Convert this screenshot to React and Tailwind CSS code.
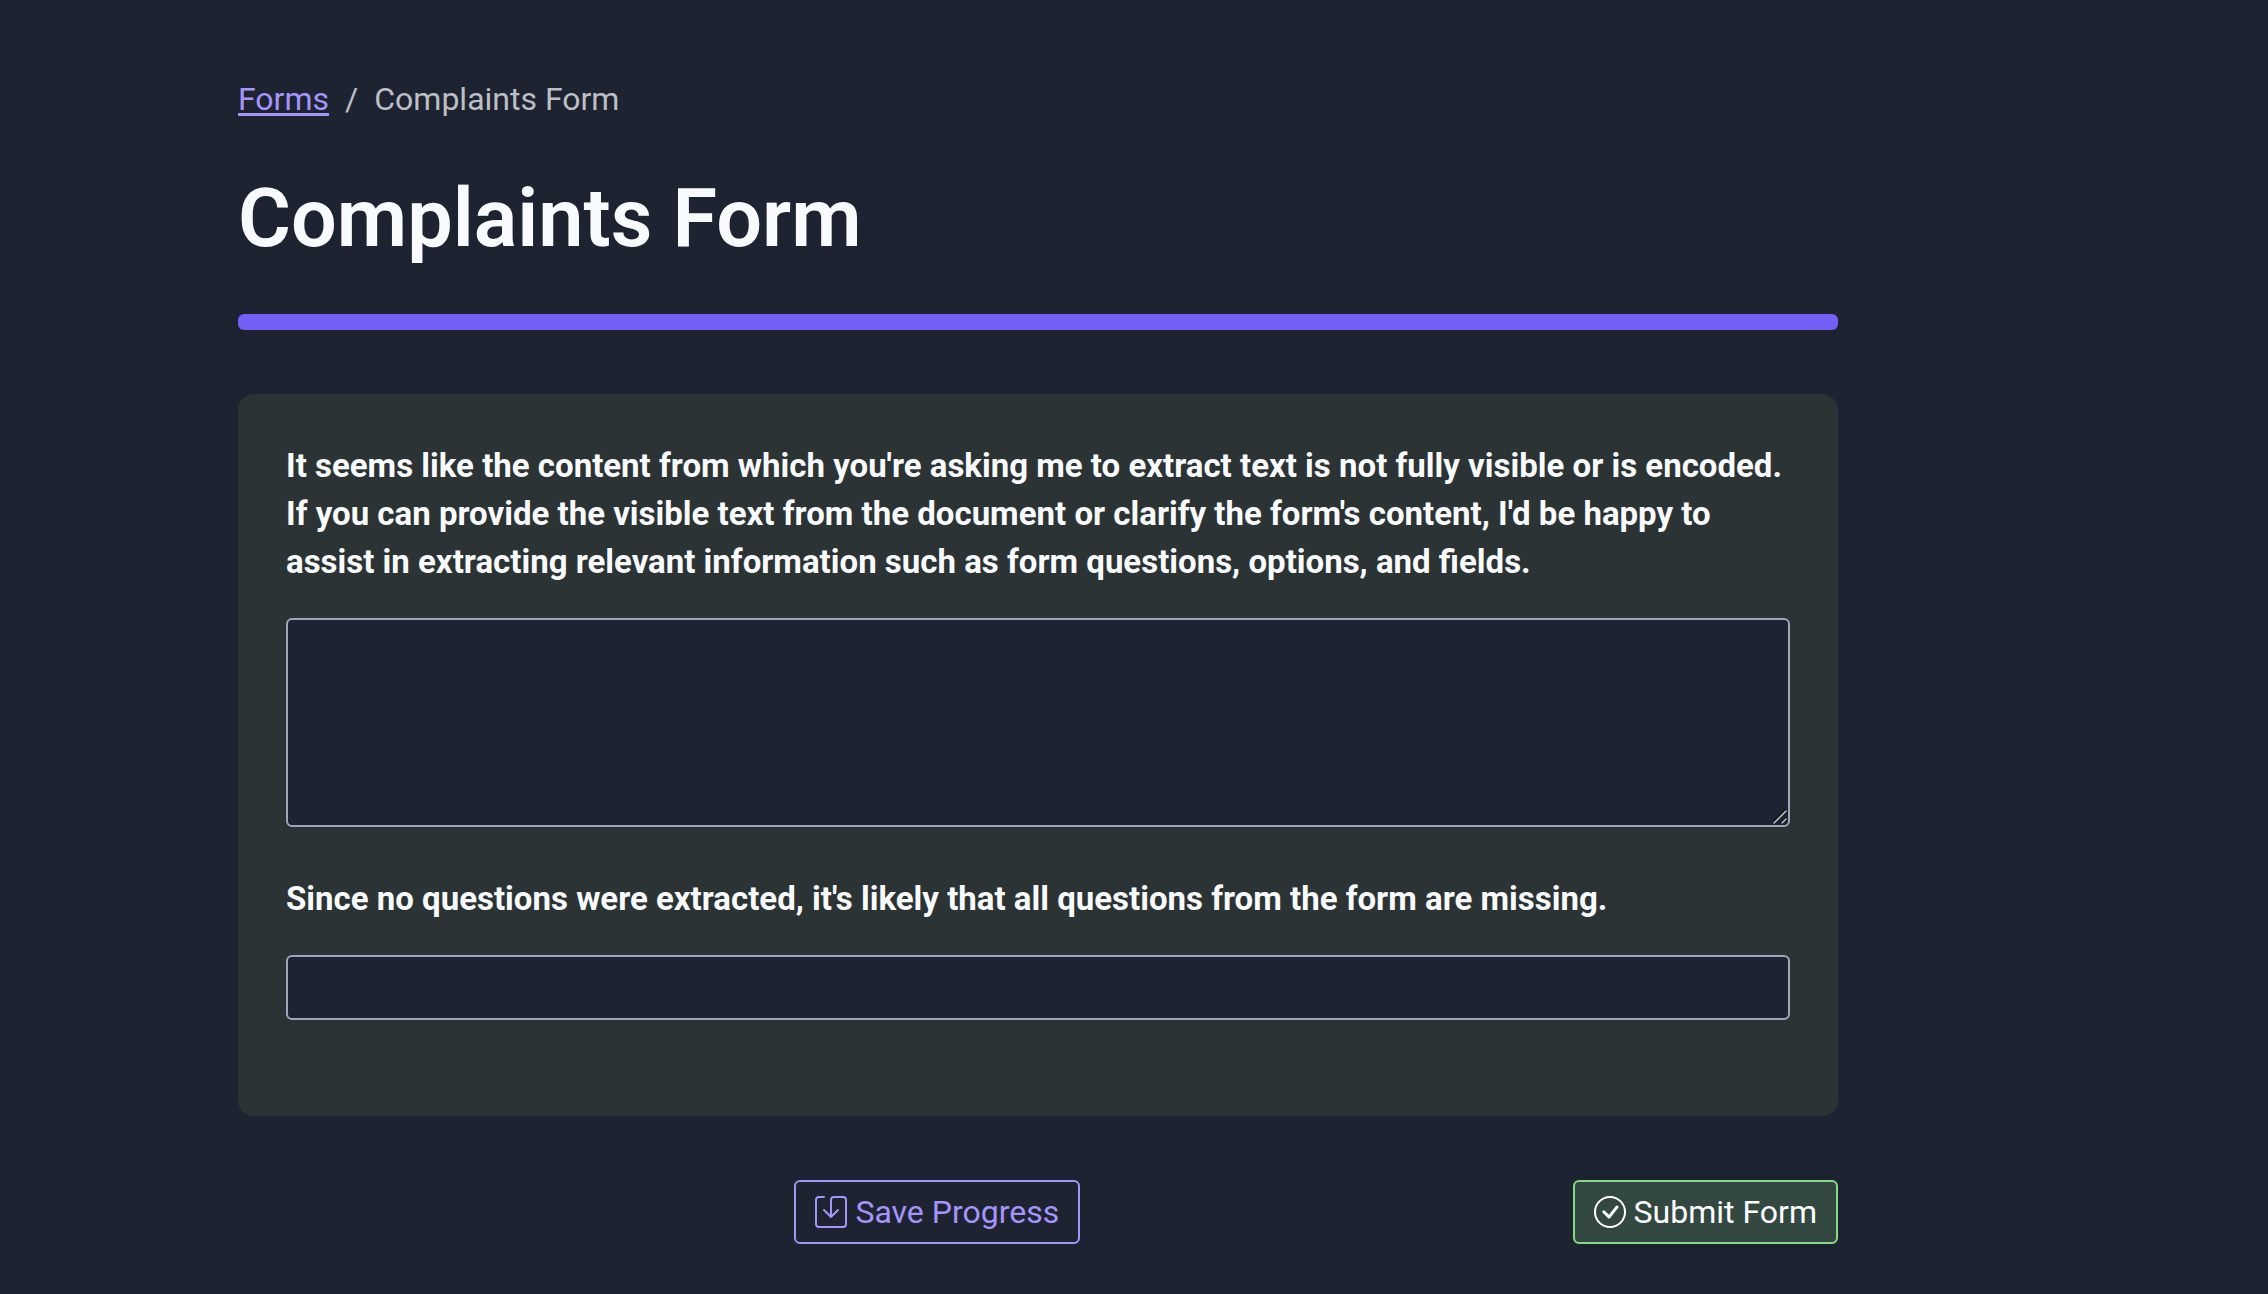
import React from "react";

function SaveIcon() {
  return (
    <svg className="size-8 shrink-0" viewBox="0 0 16 16" fill="currentColor" aria-hidden="true">
      <path d="M2 1a1 1 0 0 0-1 1v12a1 1 0 0 0 1 1h12a1 1 0 0 0 1-1V2a1 1 0 0 0-1-1H9.500a1 1 0 0 0-1 1v7.293l2.646-2.647a.5.5 0 0 1 .708.708l-3.500 3.500a.5.5 0 0 1-.708 0l-3.500-3.500a.5.5 0 1 1 .708-.708L7.500 9.293V2a2 2 0 0 1 2-2H14a2 2 0 0 1 2 2v12a2 2 0 0 1-2 2H2a2 2 0 0 1-2-2V2a2 2 0 0 1 2-2h2.500a.5.5 0 0 1 0 1z" />
    </svg>
  );
}

function CheckIcon() {
  return (
    <svg className="size-8 shrink-0" viewBox="0 0 16 16" fill="currentColor" aria-hidden="true">
      <path d="M8 15A7 7 0 1 1 8 1a7 7 0 0 1 0 14m0 1A8 8 0 1 0 8 0a8 8 0 0 0 0 16" />
      <path d="m10.970 4.970-.020.022-3.473 4.425-2.093-2.094a.750.750 0 0 0-1.060 1.060L6.970 11.030a.750.750 0 0 0 1.079-.020l3.992-4.990a.750.750 0 0 0-1.071-1.050" />
    </svg>
  );
}

function ResizeGrip() {
  return (
    <svg
      className="pointer-events-none absolute right-0.5 bottom-0.5 size-4"
      viewBox="0 0 16 16"
      fill="none"
      strokeLinecap="round"
      aria-hidden="true"
    >
      <path d="M1 13 13 1M9 14l5-5" stroke="#111319" strokeWidth="2" />
      <path d="M2 14 14 2M10 14l4-4" stroke="#c4c6c8" strokeWidth="1.5" />
    </svg>
  );
}

export default function App() {
  return (
    <div className="min-h-screen bg-[#1e2332] px-[238px] pt-[75px] pb-[50px] font-[Roboto,sans-serif] text-[32px] leading-[48px] text-[#f8fafc]">
      <main className="max-w-[1600px]">
        <nav aria-label="Breadcrumb">
          <ol className="flex gap-4">
            <li>
              <a href="#forms" className="text-[#a594f9] underline decoration-[3px] underline-offset-[3px]">
                Forms
              </a>
            </li>
            <li className="flex gap-4 text-[#bdbfc4]">
              <span aria-hidden="true">/</span>
              <span aria-current="page">Complaints Form</span>
            </li>
          </ol>
        </nav>

        <h1 className="mt-12 text-[81px] leading-[96px] font-semibold">Complaints Form</h1>
        <div className="mt-[47px] h-4 rounded-md bg-[#755ff7]" />

        <form onSubmit={(e) => e.preventDefault()}>
          <section className="mt-16 rounded-2xl bg-[#2c3335] px-12 pt-12 pb-24">
            <label htmlFor="content" className="block text-[33px] font-bold">
              It seems like the content from which you're asking me to extract text is not fully visible or is
              encoded. If you can provide the visible text from the document or clarify the form's content, I'd be
              happy to assist in extracting relevant information such as form questions, options, and fields.
            </label>
            <div className="relative mt-8">
              <textarea
                id="content"
                className="block h-[209px] w-full resize-none rounded-md border-2 border-[#a0a5ba] bg-[#1e2332] px-4 py-2"
              />
              <ResizeGrip />
            </div>

            <label htmlFor="questions" className="mt-12 block text-[33px] font-bold">
              Since no questions were extracted, it's likely that all questions from the form are missing.
            </label>
            <input
              id="questions"
              type="text"
              className="mt-8 block h-[65px] w-full rounded-md border-2 border-[#a0a5ba] bg-[#1e2332] px-4"
            />
          </section>

          <div className="mt-16 flex justify-between">
            <div className="w-16" />
            <button
              type="button"
              className="flex h-16 items-center gap-2 rounded-md border-2 border-[#a594f9] px-[19px] text-[#a594f9]"
            >
              <SaveIcon />
              Save Progress
            </button>
            <button
              type="submit"
              className="flex h-16 items-center gap-2 rounded-md border-2 border-[#86d987] bg-[#344842] px-[19px] text-white"
            >
              <CheckIcon />
              Submit Form
            </button>
          </div>
        </form>
      </main>
    </div>
  );
}
